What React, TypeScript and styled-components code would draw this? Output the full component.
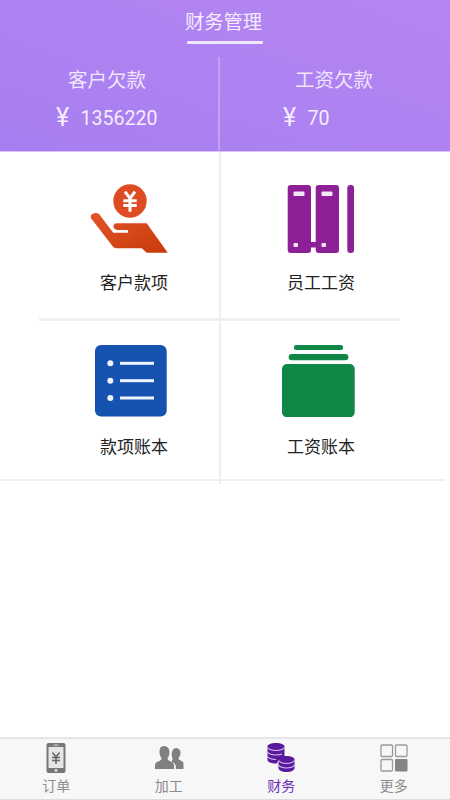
import React from "react";
import styled, { createGlobalStyle } from "styled-components";

const GlobalStyle = createGlobalStyle`
  html, body {
    margin: 0;
    padding: 0;
    background: #fff;
  }
  body {
    font-family: Roboto, "Noto Sans CJK SC", sans-serif;
  }
`;

const Page = styled.div`
  width: 450px;
  height: 800px;
  display: flex;
  flex-direction: column;
  overflow: hidden;
`;

const Header = styled.header`
  height: 152px;
  box-sizing: border-box;
  flex: none;
  display: flex;
  flex-direction: column;
  background: linear-gradient(20deg, #a77ef0 0%, #b586f2 100%);
  border-bottom: 1px solid #d9c4f8;
`;

const TitleWrap = styled.div`
  height: 57px;
  flex: none;
  display: flex;
  flex-direction: column;
  align-items: center;
`;

const Title = styled.h1`
  margin: 7px 3px 0 0;
  height: 28px;
  line-height: 28px;
  font-size: 19.3px;
  font-weight: 400;
  color: #f4ecff;
  font-family: "Noto Sans CJK SC", sans-serif;
`;

const TitleBar = styled.div`
  width: 76px;
  height: 3px;
  margin-top: 6px;
  border-radius: 1px;
  background: #f1e8ff;
`;

const Stats = styled.div`
  flex: 1;
  display: grid;
  grid-template-columns: 218px 2px 1fr;
`;

const StatDivider = styled.div`
  background: #c3a2f6;
`;

const Stat = styled.div<{ $labelLeft: number; $amountLeft: number }>`
  --label-left: ${(p) => p.$labelLeft}px;
  --amount-left: ${(p) => p.$amountLeft}px;
  display: flex;
  flex-direction: column;
`;

const StatLabel = styled.div`
  margin: 9px 0 0 var(--label-left);
  height: 26px;
  line-height: 26px;
  font-size: 19.5px;
  color: #efe5ff;
  font-family: "Noto Sans CJK SC", sans-serif;
`;

const StatAmount = styled.div`
  margin: 13px 0 0 var(--amount-left);
  height: 26px;
  display: flex;
  align-items: center;
  color: #f4ecff;
  font-size: 19.6px;
`;

const Yen = styled.span`
  width: 24.5px;
  font-size: 25px;
  line-height: 26px;
`;

const Menu = styled.main`
  position: relative;
  flex: 1;
  display: flex;
  flex-direction: column;
  align-items: flex-start;
`;

const MenuDivider = styled.div`
  position: absolute;
  top: 0;
  left: 219px;
  width: 2px;
  height: 332px;
  background: #eeeeee;
`;

const MenuRow = styled.div<{ $height: number; $top: number }>`
  height: ${(p) => p.$height}px;
  box-sizing: border-box;
  width: 100%;
  flex: none;
  padding-top: ${(p) => p.$top}px;
  display: grid;
  grid-template-columns: 221px 1fr;
`;

const MenuCell = styled.div<{ $pad: string }>`
  display: flex;
  flex-direction: column;
  align-items: center;
  padding: ${(p) => p.$pad};
`;

const MenuIcon = styled.svg<{ $width: number }>`
  display: block;
  width: ${(p) => p.$width}px;
  height: 72px;
  flex: none;
`;

const MenuLabel = styled.div<{ $gap: number }>`
  margin-top: ${(p) => p.$gap}px;
  height: 24px;
  line-height: 24px;
  font-size: 17px;
  color: #222222;
  font-family: "Noto Sans CJK SC", sans-serif;
`;

const RowLine = styled.div<{ $left: number; $width: number; $thick: number }>`
  flex: none;
  height: ${(p) => p.$thick}px;
  margin-left: ${(p) => p.$left}px;
  width: ${(p) => p.$width}px;
  background: #efefef;
`;

const TabBar = styled.nav`
  flex: none;
  height: 63px;
  box-sizing: border-box;
  display: grid;
  grid-template-columns: repeat(4, 1fr);
  background: #f7f7f7;
  border-top: 2px solid #e6e6e6;
  border-bottom: 1px solid #dddddd;
`;

const Tab = styled.div<{ $active?: boolean }>`
  display: flex;
  flex-direction: column;
  align-items: center;
  color: ${(p) => (p.$active ? "#6d2fb5" : "#8c8c8c")};
`;

const TabIcon = styled.svg`
  display: block;
  width: 32px;
  height: 32px;
  margin-top: 3px;
  flex: none;
`;

const TabLabel = styled.div`
  height: 20px;
  line-height: 20px;
  margin-top: 1px;
  font-size: 14px;
  font-family: "Noto Sans CJK SC", sans-serif;
`;

const HandIcon = () => (
  <MenuIcon $width={88} viewBox="0 0 88 72">
    <defs>
      <linearGradient id="hand" x1="0" y1="0" x2="1" y2="1">
        <stop offset="0" stopColor="#e2552a" />
        <stop offset="1" stopColor="#c83a08" />
      </linearGradient>
    </defs>
    <circle cx="40" cy="17" r="16.7" fill="#dd4c22" />
    <path
      d="M35 7.700 40 14.500 45 7.700M33.300 16.700H46.700M33.300 21.500H46.700M40 14.500V27.700"
      fill="none"
      stroke="#fff"
      strokeWidth="3"
    />
    <path
      d="M56.700 39.300 77.700 68.700H56.700L51.700 64.300H26.700Q23.700 64.300 21.700 61L1 34.300Q0 31.500 2.500 30 5.500 28 9 30L23.300 48.700H38.300L37.700 46H26.700Q23.300 44.500 23.300 42.700 23.700 39.300 26.700 39.300Z"
      fill="url(#hand)"
    />
  </MenuIcon>
);

const BinderIcon = () => (
  <MenuIcon $width={78} viewBox="-5 0 78 72">
    <path
      d="M3.700 1H21a3 3 0 0 1 3 3V58H28.700V4a3 3 0 0 1 3-3H49a3 3 0 0 1 3 3V66a3 3 0 0 1-3 3H31.700a3 3 0 0 1-3-3V63.500H24V66a3 3 0 0 1-3 3H3.700a3 3 0 0 1-3-3V4a3 3 0 0 1 3-3Z"
      fill="#8d1f97"
    />
    <rect x="60.300" y="1" width="6.700" height="68" rx="3" fill="#8d1f97" />
    <rect x="6.500" y="7.500" width="11" height="4.500" rx="1" fill="#f3e6f5" />
    <rect x="34.500" y="7.500" width="11" height="4.500" rx="1" fill="#f3e6f5" />
    <rect x="6.500" y="59" width="4.500" height="4" rx="1" fill="#f3e6f5" />
    <rect x="34.500" y="59" width="4.500" height="4" rx="1" fill="#f3e6f5" />
  </MenuIcon>
);

const ListIcon = () => (
  <MenuIcon $width={78} viewBox="0 0 78 72">
    <rect x="0" y="0" width="71.700" height="71.500" rx="6" fill="#1652b0" />
    <g fill="#eef4ff">
      <circle cx="15.300" cy="18.300" r="3" />
      <circle cx="15.300" cy="35.700" r="3" />
      <circle cx="15.300" cy="53" r="3" />
      <rect x="25" y="16.800" width="34" height="3" />
      <rect x="25" y="34.200" width="34" height="3" />
      <rect x="25" y="51.500" width="34" height="3" />
    </g>
  </MenuIcon>
);

const TrayIcon = () => (
  <MenuIcon $width={78} viewBox="0 0 78 72">
    <g fill="#0e8747">
      <rect x="12" y="0" width="49" height="5" rx="2" />
      <rect x="6.700" y="9" width="59.700" height="6.300" rx="3" />
      <rect x="0" y="19" width="72.700" height="53.300" rx="5" />
    </g>
  </MenuIcon>
);

const PhoneTab = () => (
  <TabIcon viewBox="0 0 32 32">
    <rect x="6.500" y="1" width="19" height="30" rx="2" fill="#777" />
    <rect x="8.500" y="5" width="15" height="21" fill="#e6e6e6" />
    <rect x="13.500" y="2.600" width="5" height="1" fill="#ddd" />
    <circle cx="16" cy="28.500" r="1.400" fill="#ddd" />
    <path
      d="M12.500 10.500 16 15 19.500 10.500M12 15.500h8M12 18.500h8M16 15v7"
      fill="none"
      stroke="#666"
      strokeWidth="1.500"
    />
  </TabIcon>
);

const PeopleTab = () => (
  <TabIcon viewBox="0 0 32 32">
    <g fill="#808080">
      <path d="M23 6c3 0 4.500 2.200 4.500 5 0 2-1 3.800-2 5 0 1.500 1 2 3 3 1.500.7 2 1.500 2 2.500V27H22.800v-2.500c0-2.500-2-3.800-4-4.800 0-1 .4-1.800 1-2.700-1-2-1.200-3.500-1-5.500.3-2.500 1.800-5.500 4.200-5.500Z" />
      <path d="M11 4c3.500 0 5.500 2.800 5.500 6.200 0 2.500-1 4.500-2 6 0 1.800 1.500 2.400 3.500 3.400 2 1 3 2 3 3.400V27H2v-4c0-1.400 1-2.400 3-3.400s3.500-1.600 3.500-3.400c-1-1.500-2-3.500-2-6C6.500 6.800 7.500 4 11 4Z" />
    </g>
  </TabIcon>
);

const CoinsTab = () => (
  <TabIcon viewBox="0 0 32 32">
    <g fill="#5a1a9e">
      <path d="M2.500 4.500C2.500 2.500 6.500 1 11 1s8.500 1.500 8.500 3.500V16c-4 .5-7 2.500-7.500 5.500-5 .3-9.500-1.300-9.500-3.500Z" />
      <path d="M13.500 17.500c0-2 3.800-3.500 8-3.500s8 1.500 8 3.500V26c0 2.500-3.800 4-8 4s-8-1.500-8-4Z" />
    </g>
    <g fill="none" stroke="#d9c3ee" strokeWidth="1.100">
      <path d="M2.500 5.500C4 7.500 7.500 8.500 11 8.500s7-1 8.500-3" />
      <path d="M2.500 10C4 12 7.500 13 11 13c2 0 4-.3 6-1" />
      <path d="M2.500 14.500C4 16.500 7.500 17.500 11 17.500" />
      <path d="M13.500 18.500c1.500 2 4.500 3 8 3s6.500-1 8-3" />
      <path d="M13.500 23c1.500 2 4.500 3 8 3s6.500-1 8-3" />
    </g>
  </TabIcon>
);

const GridTab = () => (
  <TabIcon viewBox="0 0 32 32">
    <g fill="none" stroke="#9a9a9a" strokeWidth="1.300">
      <rect x="3" y="3" width="11.500" height="11.500" rx="1" />
      <rect x="17.500" y="3" width="11.500" height="11.500" rx="1" />
      <rect x="3" y="17.500" width="11.500" height="11.500" rx="1" />
    </g>
    <rect x="17" y="17" width="12.500" height="12.500" rx="1" fill="#858585" />
  </TabIcon>
);

export default function App() {
  return (
    <Page>
      <GlobalStyle />
      <Header>
        <TitleWrap>
          <Title>财务管理</Title>
          <TitleBar />
        </TitleWrap>
        <Stats>
          <Stat $labelLeft={68} $amountLeft={56}>
            <StatLabel>客户欠款</StatLabel>
            <StatAmount>
              <Yen>¥</Yen>1356220
            </StatAmount>
          </Stat>
          <StatDivider />
          <Stat $labelLeft={75} $amountLeft={63}>
            <StatLabel>工资欠款</StatLabel>
            <StatAmount>
              <Yen>¥</Yen>70
            </StatAmount>
          </Stat>
        </Stats>
      </Header>
      <Menu>
        <MenuDivider />
        <MenuRow $height={166} $top={32}>
          <MenuCell $pad="0 0 0 47px">
            <HandIcon />
            <MenuLabel $gap={14}>客户款项</MenuLabel>
          </MenuCell>
          <MenuCell $pad="0 29px 0 0">
            <BinderIcon />
            <MenuLabel $gap={14}>员工工资</MenuLabel>
          </MenuCell>
        </MenuRow>
        <RowLine $left={39} $width={361} $thick={3} />
        <MenuRow $height={158} $top={24}>
          <MenuCell $pad="0 0 0 47px">
            <ListIcon />
            <MenuLabel $gap={17}>款项账本</MenuLabel>
          </MenuCell>
          <MenuCell $pad="0 29px 0 0">
            <TrayIcon />
            <MenuLabel $gap={17}>工资账本</MenuLabel>
          </MenuCell>
        </MenuRow>
        <RowLine $left={0} $width={445} $thick={2} />
      </Menu>
      <TabBar>
        <Tab>
          <PhoneTab />
          <TabLabel>订单</TabLabel>
        </Tab>
        <Tab>
          <PeopleTab />
          <TabLabel>加工</TabLabel>
        </Tab>
        <Tab $active>
          <CoinsTab />
          <TabLabel>财务</TabLabel>
        </Tab>
        <Tab>
          <GridTab />
          <TabLabel>更多</TabLabel>
        </Tab>
      </TabBar>
    </Page>
  );
}
